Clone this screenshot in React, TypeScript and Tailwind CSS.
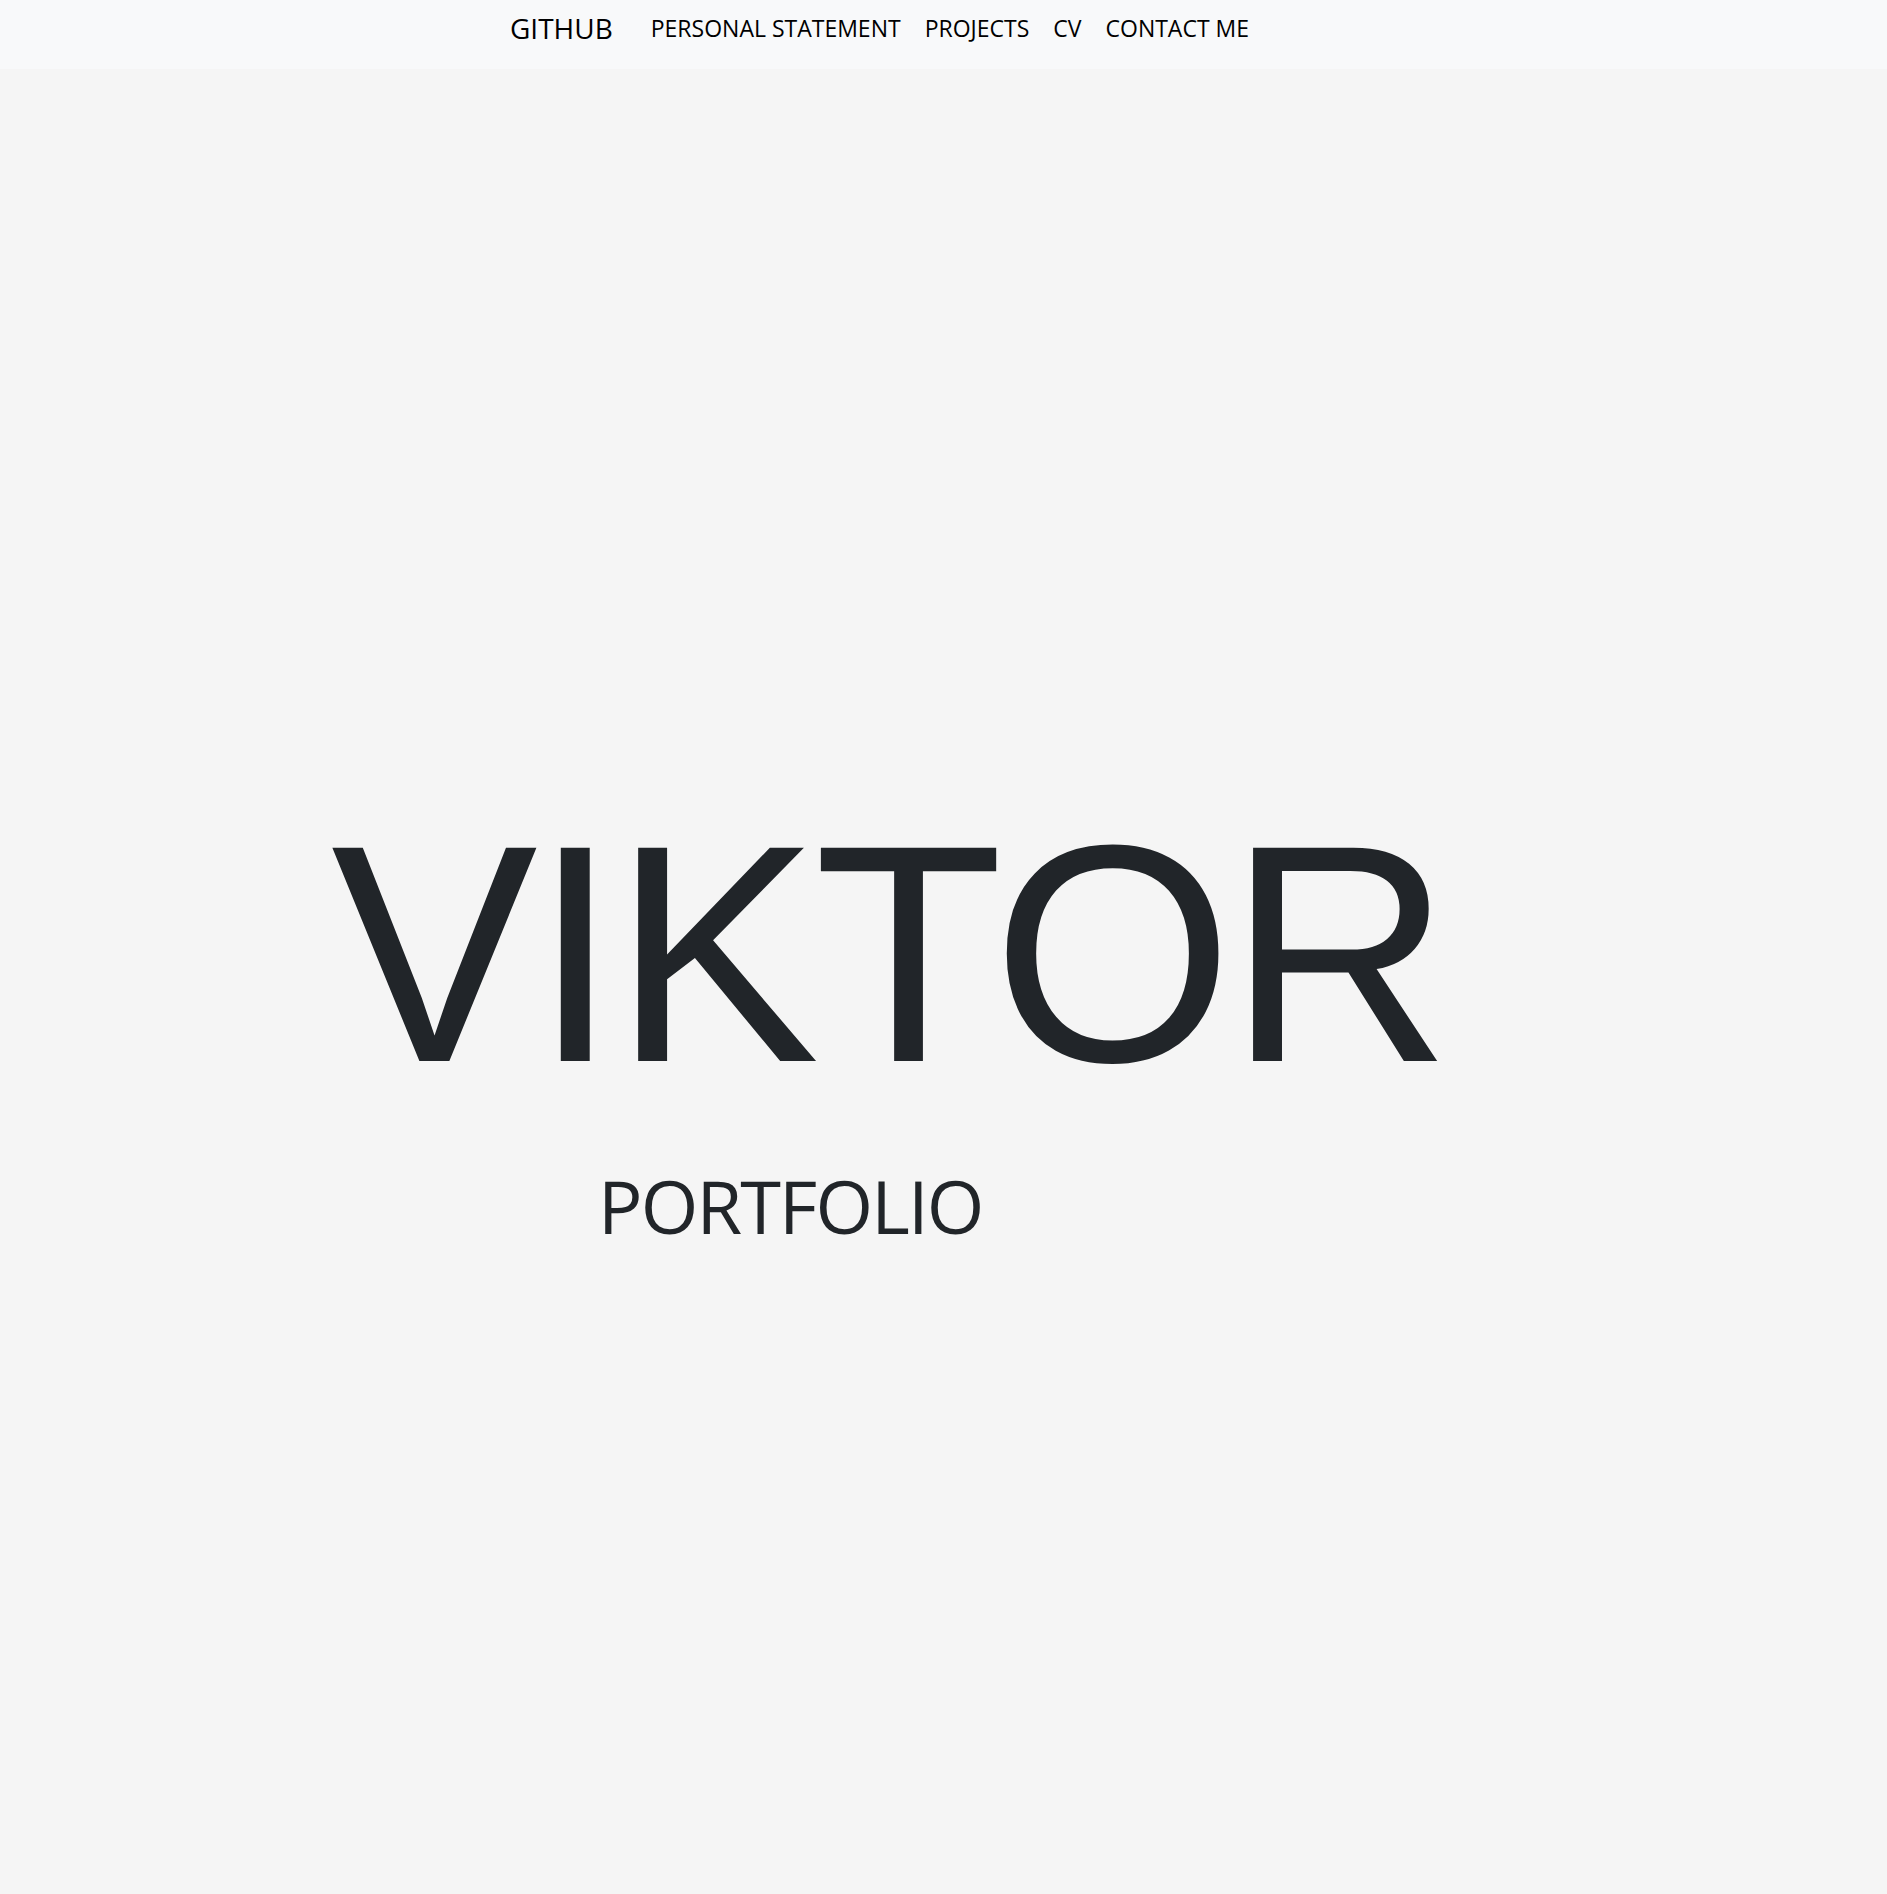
export default function App() {
  const links = ['PERSONAL STATEMENT', 'PROJECTS', 'CV', 'CONTACT ME'];

  return (
    <div className="min-h-[1894px] bg-[#f5f5f5] text-[#212529]">
      {/* Navbar */}
      <nav className="h-[69px] bg-[#f8f9fa] flex items-start pt-[9px] pl-[510px] font-['Open_Sans',sans-serif]">
        <a href="#" className="text-[28px] leading-[38px] text-black mr-[26px]">
          GITHUB
        </a>
        <ul className="flex items-center h-[38px]">
          {links.map((l) => (
            <li key={l}>
              <a href="#" className="block px-[12px] text-[23px] text-black">
                {l}
              </a>
            </li>
          ))}
        </ul>
      </nav>

      {/* Hero */}
      <section className="pt-[730px]">
        <h1 className="pl-[331px] text-[310px] leading-none tracking-[-0.018em] font-['Liberation_Sans',Arial,sans-serif]">
          VIKTOR
        </h1>
        <p className="mt-[60px] pl-[598px] text-[74px] leading-none font-['Open_Sans',sans-serif] tracking-[-0.025em]">
          PORTFOLIO
        </p>
      </section>
    </div>
  );
}
